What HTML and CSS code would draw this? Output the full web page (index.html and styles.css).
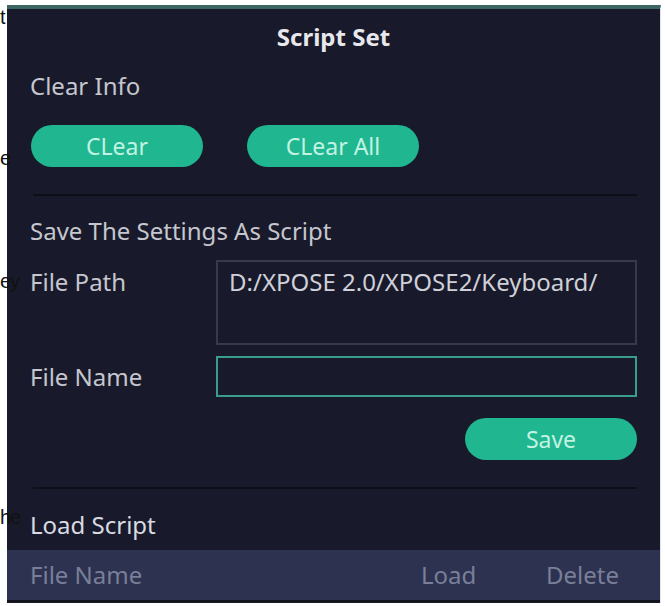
FILE: index.html
```html
<!DOCTYPE html>
<html lang="en">
<head>
    <meta charset="UTF-8">
    <meta name="viewport" content="width=device-width, initial-scale=1.0">
    <title>Script Set</title>
    <link rel="stylesheet" href="styles.css">
</head>
<body>
    <div class="gutter">
        <div class="frag frag-1">t</div>
        <div class="frag frag-2">e</div>
        <div class="frag frag-3">ey</div>
        <div class="frag frag-4">he</div>
    </div>
    <div class="panel">
        <h3 class="title">Script Set</h3>

        <div class="label">Clear Info</div>
        <div class="btn-row">
            <button class="pill-btn">CLear</button>
            <button class="pill-btn">CLear All</button>
        </div>
        <div class="divider"></div>

        <div class="label save-head">Save The Settings As Script</div>
        <div class="field-row path-row">
            <span class="field-label">File Path</span>
            <div class="path-box">D:/XPOSE 2.0/XPOSE2/Keyboard/</div>
        </div>
        <div class="field-row name-row">
            <span class="field-label">File Name</span>
            <input type="text" class="name-input">
        </div>
        <div class="save-row">
            <button class="pill-btn">Save</button>
        </div>
        <div class="divider"></div>

        <div class="label load-head">Load Script</div>
        <div class="table-head">
            <span>File Name</span>
            <span>Load</span>
            <span>Delete</span>
        </div>
    </div>
</body>
</html>
```

FILE: styles.css
```css
body {
    margin: 0;
    background: #fff;
    display: flex;
    height: 606px;
    overflow: hidden;
}
.gutter {
    width: 7px;
    flex-shrink: 0;
    position: relative;
    z-index: 2;
    font-family: "Liberation Sans", Arial, sans-serif;
    font-size: 20px;
    line-height: 26px;
    letter-spacing: -1px;
    color: #111;
}
.frag {
    white-space: nowrap;
}
.frag-1 { margin-top: 4px; }
.frag-2 { margin-top: 115px; }
.frag-3 { margin-top: 97px; }
.frag-4 { margin-top: 210px; }
.panel {
    width: 653px;
    height: 594px;
    margin-top: 5px;
    border-top: 4px solid #3c6662;
    border-right: 1px solid #e4e4e8;
    background: #181a2b;
    font-family: "Noto Sans", "DejaVu Sans", sans-serif;
    font-size: 24px;
    line-height: 32px;
    color: #c6c6ce;
    display: flex;
    flex-direction: column;
}
.title {
    margin: 0;
    padding-top: 12px;
    text-align: center;
    font-size: 24px;
    font-weight: bold;
    color: #e8e8ec;
}
.label {
    margin: 17px 23px 0;
}
.btn-row {
    display: flex;
    gap: 44px;
    margin: 23px 24px 0;
}
.pill-btn {
    width: 172px;
    height: 42px;
    border: none;
    border-radius: 21px;
    background: #1fb690;
    color: #c2f3e2;
    font-family: "Noto Sans", "DejaVu Sans", sans-serif;
    font-size: 23px;
    padding: 0;
}
.divider {
    height: 2px;
    margin: 27px 23px 0 26px;
    background: #0d0e18;
}
.save-head {
    margin-top: 19px;
}
.field-row {
    display: flex;
    margin: 0 23px;
}
.field-label {
    width: 186px;
    flex-shrink: 0;
}
.path-row {
    margin-top: 13px;
    align-items: flex-start;
}
.path-row .field-label {
    margin-top: 6px;
}
.path-box {
    flex: 1;
    height: 85px;
    box-sizing: border-box;
    border: 2px solid #363a4a;
    padding: 4px 11px 0;
    color: #d0d0d8;
    white-space: nowrap;
}
.name-row {
    margin-top: 11px;
    align-items: center;
}
.name-input {
    flex: 1;
    height: 41px;
    box-sizing: border-box;
    border: 2px solid #3a9c8e;
    background: transparent;
    color: #d0d0d8;
    font-size: 22px;
    outline: none;
}
.save-row {
    display: flex;
    justify-content: flex-end;
    margin: 21px 23px 0;
}
.load-head {
    margin-top: 20px;
    color: #dadae2;
}
.table-head {
    display: grid;
    grid-template-columns: 391px 125px 1fr;
    align-items: center;
    margin-top: 9px;
    height: 50px;
    padding-left: 23px;
    background: #2c3250;
    border-bottom: 2px solid #12131d;
    color: #797f98;
}
```
